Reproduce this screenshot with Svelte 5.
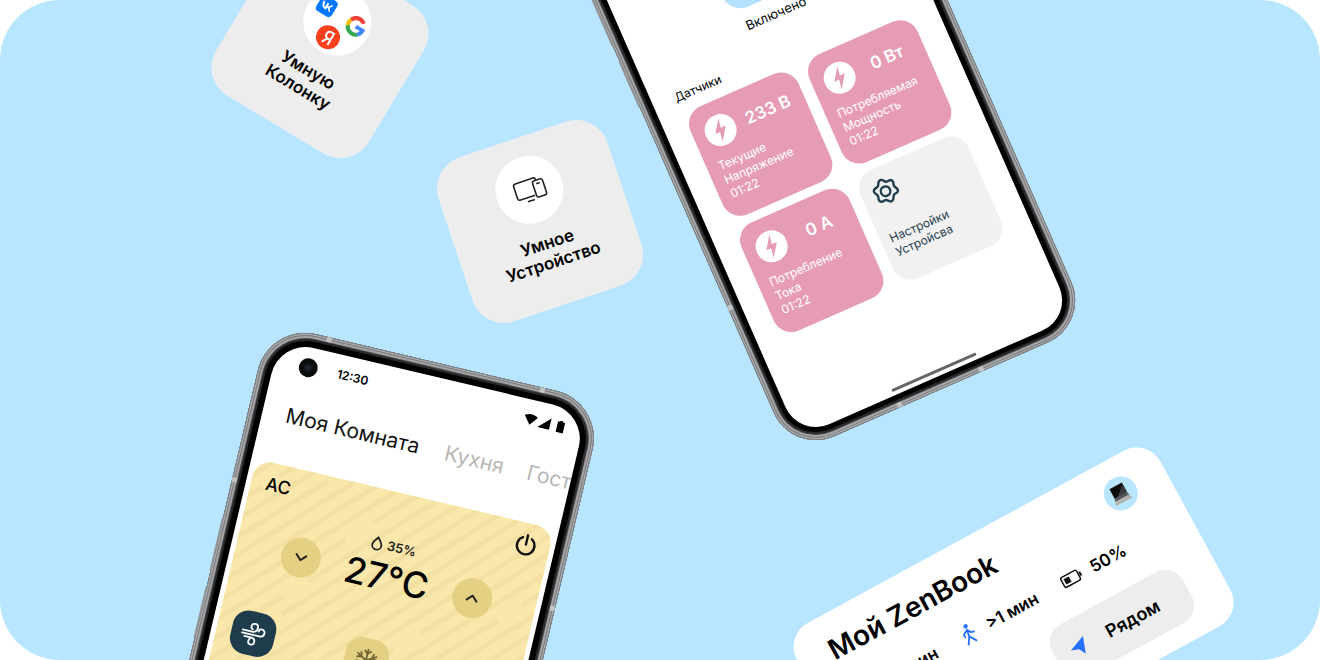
<script>
  const sensors = [
    { value: '233 В', lines: ['Текущие', 'Напряжение', '01:22'] },
    { value: '0 Вт', lines: ['Потребляемая', 'Мощность', '01:22'] },
    { value: '0 А', lines: ['Потребление', 'Тока', '01:22'] }
  ];
  const rooms = ['Моя Комната', 'Кухня', 'Гостиная'];
  let room = $state('Моя Комната');
  let temperature = $state(27);

  // Diagonal stripes of the climate card: some are broken over a stretch of x.
  const gaps = { 1: [12, 26], 3: [75, 90], 7: [106, 128], 8: [58, 78], 9: [40, 60], 15: [178, 199], 17: [272, 292] };
  const stripes = Array.from({ length: 26 }, (_, k) => {
    const sum = 17 + 21 * k;
    const [from, to] = gaps[k] ?? [0, 0];
    return { left: `M-10 ${sum + 10}L${from} ${sum - from}`, right: `M${to} ${sum - to}L${sum + 10} -10` };
  });
</script>

<main class="hero">
  <button class="tile tile-speaker">
    <span class="disc logos">
      <svg viewBox="0 0 68 68" width="68" height="68" aria-hidden="true">
        <g transform="translate(8 17)">
          <rect width="18" height="18" rx="4" fill="#07f" />
          <path d="M3.400 5.600h2c.1 3.200 1.500 4.500 2.600 4.800V5.600h1.900v2.700c1.100-.1 2.300-1.400 2.700-2.700h1.900c-.3 1.700-1.600 2.900-2.500 3.500.9.400 2.300 1.500 2.900 3.500h-2.100c-.4-1.400-1.500-2.400-2.900-2.500v2.500h-.3C5.800 12.600 3.500 10 3.400 5.600z" fill="#fff" />
        </g>
        <g transform="translate(42 18) scale(.43)">
          <path fill="#EA4335" d="M24 9.500c3.540 0 6.710 1.220 9.210 3.600l6.850-6.850C35.900 2.380 30.470 0 24 0 14.620 0 6.510 5.380 2.560 13.220l7.980 6.190C12.430 13.720 17.740 9.500 24 9.500z" />
          <path fill="#4285F4" d="M46.980 24.550c0-1.570-.15-3.090-.38-4.550H24v9.020h12.940c-.58 2.960-2.260 5.480-4.780 7.180l7.730 6c4.510-4.180 7.090-10.360 7.090-17.650z" />
          <path fill="#FBBC05" d="M10.530 28.590c-.48-1.450-.76-2.990-.76-4.590s.27-3.140.76-4.590l-7.980-6.190C.92 16.460 0 20.120 0 24c0 3.880.92 7.540 2.560 10.780l7.970-6.190z" />
          <path fill="#34A853" d="M24 48c6.480 0 11.930-2.130 15.890-5.810l-7.730-6c-2.150 1.450-4.920 2.300-8.160 2.300-6.260 0-11.570-4.220-13.470-9.910l-7.980 6.190C6.510 42.620 14.620 48 24 48z" />
        </g>
        <circle cx="34" cy="52" r="12" fill="#fc3f1d" />
        <path d="M37.500 45v14M37.500 46h-2.500c-2.600 0-3.900 1.500-3.900 3.700s1.300 3.600 3.900 3.600h2.500M34.300 53.300 30.800 59" fill="none" stroke="#fff" stroke-width="2" />
      </svg>
    </span>
    <span class="tile-name">Умную<br />Колонку</span>
  </button>

  <button class="tile tile-device">
    <span class="disc">
      <svg viewBox="0 0 36 30" width="36" height="30" fill="none" stroke="#222" stroke-width="1.600" stroke-linecap="round" stroke-linejoin="round" aria-hidden="true">
        <path d="M21 22H6.500A2.500 2.500 0 0 1 4 19.500v-12A2.500 2.500 0 0 1 6.500 5H25a2 2 0 0 1 2 2" />
        <rect x="23" y="8" width="10.500" height="17" rx="2.500" />
        <path d="M13.500 26h6M27 11.500h2.500" />
      </svg>
    </span>
    <span class="tile-name">Умное<br />Устройство</span>
  </button>

  <section class="phone phone-sensors">
    <i class="key key-a"></i><i class="key key-b"></i>
    <i class="seam seam-left"></i><i class="seam seam-b1"></i><i class="seam seam-b2"></i>
    <div class="screen sensors-screen">
      <button class="toggle" aria-labelledby="toggle-state"></button>
      <p class="state" id="toggle-state">Включено</p>
      <h2>Датчики</h2>
      <div class="grid">
        {#each sensors as sensor}
          <article class="sensor">
            <header>
              <svg viewBox="0 0 32 32" width="32" height="32" aria-hidden="true">
                <circle cx="16" cy="16" r="16" fill="#fff" />
                <path d="M18.500 4.500 9.500 17.500h5.300L13.200 27.500l9.300-13.500h-5.400z" fill="#e79cb6" />
              </svg>
              <strong>{sensor.value}</strong>
            </header>
            <p>{#each sensor.lines as line}<span>{line}</span>{/each}</p>
          </article>
        {/each}
        <button class="settings">
          <svg viewBox="0 0 28 28" width="28" height="28" fill="none" stroke="#1f3f50" stroke-width="2.400" stroke-linejoin="round" aria-hidden="true">
            <path d="M14 2c3 0 2.600 3 4.800 3.900 2.100.9 4.200-1.100 5.800 1 1.900 2.500-.7 3.700-.4 6 .3 2.300 3.100 3.100 1.900 5.800-1.200 2.600-3.700 1-5.500 2.400-1.800 1.500-1.200 4.400-4.200 4.800-3 .4-2.900-2.500-5.100-3.300-2.200-.8-4.200 1.200-6-1.100-1.800-2.400.6-3.900.3-6.200C5.300 13 2.500 12.200 3.700 9.500c1.200-2.600 3.800-1.300 5.600-2.700C11.100 5.300 11 2 14 2z" />
            <circle cx="14.400" cy="14.300" r="4.800" />
          </svg>
          <span>Настройки<br />Устройсва</span>
        </button>
      </div>
      <i class="home-bar"></i>
    </div>
  </section>

  <section class="phone phone-climate">
    <i class="key key-a"></i><i class="key key-b"></i>
    <i class="seam seam-t1"></i><i class="seam seam-t2"></i><i class="seam seam-left"></i><i class="seam seam-right"></i>
    <div class="screen">
      <div class="status">
        <i class="camera"></i>
        <time>12:30</time>
        <svg viewBox="0 0 42 14" width="42" height="14" aria-hidden="true">
          <path d="M0 3.500Q6.500-.8 13.500 3.500L6.800 12z" />
          <path d="M27 1v11.500H15z" />
          <path d="M34 2.200h2V1h3.200v1.200h2V13H34z" />
        </svg>
      </div>
      <nav class="rooms">
        {#each rooms as name}
          <button class:active={room === name} onclick={() => (room = name)}>{name}</button>
        {/each}
      </nav>
      <article class="climate">
        <svg class="stripes" width="306" height="330" aria-hidden="true">
          {#each stripes as stripe}
            <path d={stripe.left + stripe.right} />
          {/each}
        </svg>
        <header>
          <h2>AC</h2>
          <button class="power" aria-label="Питание">
            <svg viewBox="0 0 24 24" width="24" height="24" fill="none" stroke="#111" stroke-width="2.400" stroke-linecap="round" aria-hidden="true">
              <path d="M12 2v9.500M7.500 5A8.800 8.800 0 1 0 16.500 5" />
            </svg>
          </button>
        </header>
        <div class="dial">
          <button class="step" aria-label="Холоднее" onclick={() => temperature--}>
            <svg viewBox="0 0 16 16" width="16" height="16"><path d="M3 5.500 8 10.500l5-5" /></svg>
          </button>
          <div class="reading">
            <span class="humidity">
              <svg viewBox="0 0 12 15" width="12" height="15" fill="none" stroke="#222" stroke-width="1.800" aria-hidden="true">
                <path d="M6 1.500C8 4.200 10.600 6.500 10.600 9.300a4.600 4.600 0 0 1-9.200 0C1.400 6.500 4 4.200 6 1.500z" />
              </svg>
              35%
            </span>
            <output>{temperature}°C</output>
          </div>
          <button class="step" aria-label="Теплее" onclick={() => temperature++}>
            <svg viewBox="0 0 16 16" width="16" height="16"><path d="m3 10.500 5-5 5 5" /></svg>
          </button>
        </div>
        <div class="modes">
          <button class="mode selected" aria-label="Обдув">
            <svg viewBox="0 0 26 26" width="26" height="26" fill="none" stroke="#fff" stroke-width="1.800" stroke-linecap="round" stroke-linejoin="round" aria-hidden="true">
              <path d="M2 11.200h9.500c3 0 5-2 5-4.600 0-2.200-1.500-3.600-3.400-3.600-2 0-3.300 1.500-3.300 3.300 0 1.500.9 2.300 1.900 2.500M2 14.200h17.500c2.700 0 4.500-1.700 4.500-4 0-2-1.400-3.300-3.100-3.300-1.800 0-2.900 1.300-2.900 2.800M5 17.200h6.500c3 0 4.500 1.700 4.500 3.800 0 1.900-1.300 3.200-3 3.200-1.900 0-3-1.400-3-3 0-1.500.8-2.400 1.500-4" />
            </svg>
          </button>
          <button class="mode" aria-label="Охлаждение">
            <svg viewBox="0 0 26 26" width="26" height="26" fill="none" stroke="#6f6434" stroke-width="1.800" stroke-linecap="round" aria-hidden="true">
              <path d="M13 2v22M3.500 7.500l19 11M22.500 7.500l-19 11M10 3.500l3 3 3-3M10 22.500l3-3 3 3M3.500 11l4.200-1-1-4.200M22.500 15l-4.200 1 1 4.200M22.500 11l-4.200-1 1-4.200M3.500 15l4.200 1-1 4.200" />
            </svg>
          </button>
        </div>
      </article>
    </div>
  </section>

  <article class="tracker">
    <header>
      <h2>Мой ZenBook</h2>
      <svg viewBox="0 0 34 34" width="34" height="34" aria-hidden="true">
        <circle cx="17" cy="17" r="17" fill="#b8e5ff" />
        <path d="M9 8h14v11H9z" fill="#0c0c0d" />
        <path d="m13 18 10-8v9H13z" fill="#3a3a3c" />
        <path d="M9 19h14l1 3H8z" fill="#555" />
        <path d="M8 22h16l1 4H7z" fill="#b4b0ae" />
      </svg>
    </header>
    <div class="stats">
      <span>&gt;1 мин</span>
      <span>
        <svg viewBox="0 0 16 22" width="16" height="22" fill="none" stroke="#2670ff" stroke-width="1.800" stroke-linecap="round" stroke-linejoin="round" aria-hidden="true">
          <circle cx="9" cy="2.500" r="1.300" fill="#2670ff" />
          <path d="M8.500 6 7.500 13l4.500 7M7.500 13 3 20M8 6.500 3.500 9v3M8.800 6.500l2 3.500 3.200 1" />
        </svg>
        &gt;1 мин
      </span>
      <span class="charge">
        <svg viewBox="0 0 23 14" width="23" height="14" fill="none" stroke="#111" stroke-width="1.500" aria-hidden="true">
          <rect x="1" y="1.500" width="18" height="11" rx="2" />
          <path d="M3.500 4h6v6h-6z" fill="#111" stroke="none" />
          <path d="M21 4.800v4.400" stroke-width="2" />
        </svg>
        50%
      </span>
    </div>
    <button class="nearby">
      <svg viewBox="0 0 18 18" width="18" height="18" aria-hidden="true"><path d="M17.500 1 11.500 18 8 11 0 8z" fill="#2670ff" /></svg>
      <span>Рядом</span>
    </button>
  </article>
</main>

<style>
  :global(body) {
    margin: 0;
    background: #fff;
  }

  .hero {
    position: relative;
    min-height: 100vh;
    overflow: hidden;
    border-radius: 60px;
    background: #b8e5ff;
    color: #000;
    font-family: Inter, 'Liberation Sans', sans-serif;
  }

  button {
    margin: 0;
    padding: 0;
    border: 0;
    background: none;
    color: inherit;
    font: inherit;
    cursor: pointer;
  }

  h2,
  p {
    margin: 0;
  }

  svg {
    display: block;
    flex: none;
  }

  /* Tiles */
  .tile {
    position: absolute;
    display: flex;
    box-sizing: border-box;
    flex-direction: column;
    align-items: center;
    gap: 12px;
    width: 178px;
    height: 173px;
    padding-top: 19px;
    border-radius: 33px;
    background: #ededed;
  }

  .tile-speaker {
    top: -36px;
    left: calc(50% - 429px);
    rotate: 31deg;
  }

  .tile-device {
    top: 135px;
    left: calc(50% - 209px);
    rotate: -18.5deg;
  }

  .disc {
    display: grid;
    place-items: center;
    width: 68px;
    height: 68px;
    border-radius: 50%;
    background: #fff;
  }

  .tile-name {
    font-size: 17px;
    font-weight: 600;
    line-height: 20px;
  }

  /* Phones */
  .phone {
    position: absolute;
    box-sizing: border-box;
    padding: 13px;
    transform-origin: 0 0;
    background: #000;
    box-shadow:
      inset 0 0 0 1px #7d7e80,
      inset 0 0 0 2px #b3b3b5,
      inset 0 0 0 3px #77787a,
      inset 0 0 0 5px #a3a4a6,
      inset 0 0 0 6px #4a4a4c,
      inset 0 0 0 8px #29292b;
  }

  .screen {
    display: flex;
    flex-direction: column;
    height: 100%;
    overflow: hidden;
    background: #fff;
  }

  .key {
    position: absolute;
    left: -1px;
    width: 2px;
    background: #929395;
  }

  .seam {
    position: absolute;
    width: 5px;
    height: 5px;
    background: #c2c3c5;
  }

  .phone-sensors {
    top: -81px;
    left: calc(50% - 103px);
    width: 325px;
    height: 585px;
    border-radius: 46px;
    transform: rotate(-23.7deg);
  }

  .phone-sensors .screen {
    border-radius: 33px;
  }

  .phone-sensors .key-a {
    top: 80px;
    height: 59px;
  }

  .phone-sensors .key-b {
    top: 156px;
    height: 50px;
  }

  .phone-sensors .seam-left {
    top: 423px;
    left: 0;
  }

  .seam-b1 {
    bottom: 0;
    left: 116px;
  }

  .seam-b2 {
    bottom: 0;
    left: 205px;
  }

  .sensors-screen {
    align-items: center;
    justify-content: flex-end;
  }

  .toggle {
    width: 85px;
    height: 85px;
    border-radius: 20px;
    background: #b2e2ff;
  }

  .state {
    margin-top: 9px;
    font-size: 13px;
    line-height: 16px;
  }

  .sensors-screen h2 {
    align-self: flex-start;
    margin: 22px 0 9px 23px;
    font-size: 12px;
    font-weight: 400;
    line-height: 16px;
  }

  .grid {
    display: grid;
    grid-template-columns: 118px 118px;
    grid-auto-rows: 118px;
    gap: 9px 12px;
    margin-right: 4px;
  }

  .sensor,
  .settings {
    box-sizing: border-box;
    border-radius: 19px;
    background: #e79cb6;
    color: #fff;
  }

  .sensor {
    padding: 14px 12px 0;
  }

  .sensor header {
    display: flex;
    align-items: center;
    margin-bottom: 9px;
  }

  .sensor strong {
    flex: 1;
    margin-right: -10px;
    font-size: 17px;
    font-weight: 600;
    line-height: 24px;
    text-align: center;
  }

  .sensor p {
    font-size: 12px;
    font-weight: 400;
    line-height: 15px;
  }

  .sensor p span {
    display: block;
  }

  .settings {
    display: flex;
    flex-direction: column;
    gap: 24px;
    padding: 11px 10px 0;
    background: #f1f1f1;
    color: #1f3f50;
    font-size: 12px;
    line-height: 15px;
    text-align: left;
  }

  .home-bar {
    width: 92px;
    height: 3px;
    margin: 91px 0 4px;
    border-radius: 2px;
    background: #666;
  }

  .phone-climate {
    top: 323px;
    left: calc(50% - 391px);
    width: 344px;
    height: 440px;
    padding: 14px;
    border-radius: 49px;
    transform: rotate(13.3deg);
  }

  .phone-climate .screen {
    border-radius: 35px 35px 0 0;
  }

  .phone-climate .key-a {
    top: 200px;
    height: 54px;
  }

  .phone-climate .key-b {
    top: 272px;
    height: 51px;
  }

  .seam-t1 {
    top: 0;
    left: 60px;
  }

  .seam-t2 {
    top: 0;
    left: 279px;
  }

  .phone-climate .seam-left {
    top: 158px;
    left: 0;
  }

  .seam-right {
    top: 210px;
    right: 0;
  }

  .status {
    display: flex;
    align-items: center;
    padding: 10px 18px 0 25px;
    font-size: 12px;
    font-weight: 600;
    line-height: 20px;
  }

  .status svg {
    margin-left: auto;
  }

  .camera {
    width: 19px;
    height: 19px;
    margin-right: 20px;
    border-radius: 50%;
    background: radial-gradient(circle, #1d242c 0 2px, #0b0c0e 5px);
  }

  .rooms {
    display: flex;
    gap: 24px;
    padding: 28px 0 35px 24px;
    font-size: 21px;
    line-height: 28px;
    white-space: nowrap;
  }

  .rooms button {
    color: #b6b6b6;
  }

  .rooms .active {
    padding-right: 2px;
    color: #111;
  }

  .climate {
    position: relative;
    z-index: 0;
    flex: 1;
    margin: 0 5px;
    overflow: hidden;
    border-radius: 18px 18px 0 0;
    background: #f9e7ab;
  }

  .stripes {
    position: absolute;
    inset: 0;
    z-index: -1;
    stroke: #f3e0a2;
    stroke-width: 5;
  }

  .climate header {
    display: flex;
    align-items: center;
    justify-content: space-between;
    padding: 10px 12px 0 15px;
  }

  .climate h2 {
    font-size: 18px;
    font-weight: 500;
    line-height: 24px;
  }

  .dial {
    display: flex;
    align-items: center;
    justify-content: space-between;
    padding: 10px 44px 0 46px;
  }

  .step {
    display: grid;
    place-items: center;
    width: 40px;
    height: 40px;
    margin-top: 20px;
    border-radius: 50%;
    background: #e4d083;
  }

  .step svg {
    fill: none;
    stroke: #222;
    stroke-width: 2;
    stroke-linecap: round;
    stroke-linejoin: round;
  }

  .reading {
    display: flex;
    flex-direction: column;
    align-items: center;
  }

  .humidity {
    display: flex;
    align-items: center;
    gap: 4px;
    color: #222;
    font-size: 13px;
    font-weight: 600;
    line-height: 20px;
  }

  .reading output {
    font-size: 36px;
    font-weight: 500;
    line-height: 44px;
  }

  .modes {
    display: grid;
    grid-template-columns: repeat(3, 44px);
    justify-content: space-between;
    padding: 41px 15px 0;
  }

  .mode {
    display: grid;
    place-items: center;
    height: 44px;
    border-radius: 16px;
    background: #e4d083;
  }

  .mode.selected {
    background: #1f3c4d;
  }

  /* Tracker card */
  .tracker {
    position: absolute;
    top: 636px;
    left: calc(50% + 124px);
    box-sizing: border-box;
    width: 414px;
    height: 200px;
    padding: 19px 33px;
    border-radius: 27px;
    background: #fff;
    transform: rotate(-28.6deg);
    transform-origin: 0 0;
  }

  .tracker header {
    display: flex;
    align-items: center;
    justify-content: space-between;
  }

  .tracker h2 {
    font-size: 28px;
    font-weight: 600;
    line-height: 34px;
  }

  .stats {
    display: flex;
    justify-content: flex-end;
    gap: 28px;
    padding: 22px 40px 0 0;
    font-size: 17px;
    font-weight: 600;
    line-height: 24px;
  }

  .stats span {
    display: flex;
    align-items: center;
    gap: 13px;
    white-space: nowrap;
  }

  .stats .charge {
    gap: 10px;
  }

  .nearby {
    display: flex;
    align-items: center;
    gap: 22px;
    width: 149px;
    height: 58px;
    margin: 23px 4px 0 auto;
    padding-left: 17px;
    border-radius: 20px;
    background: #ededed;
    font-size: 18px;
    font-weight: 600;
  }
</style>
